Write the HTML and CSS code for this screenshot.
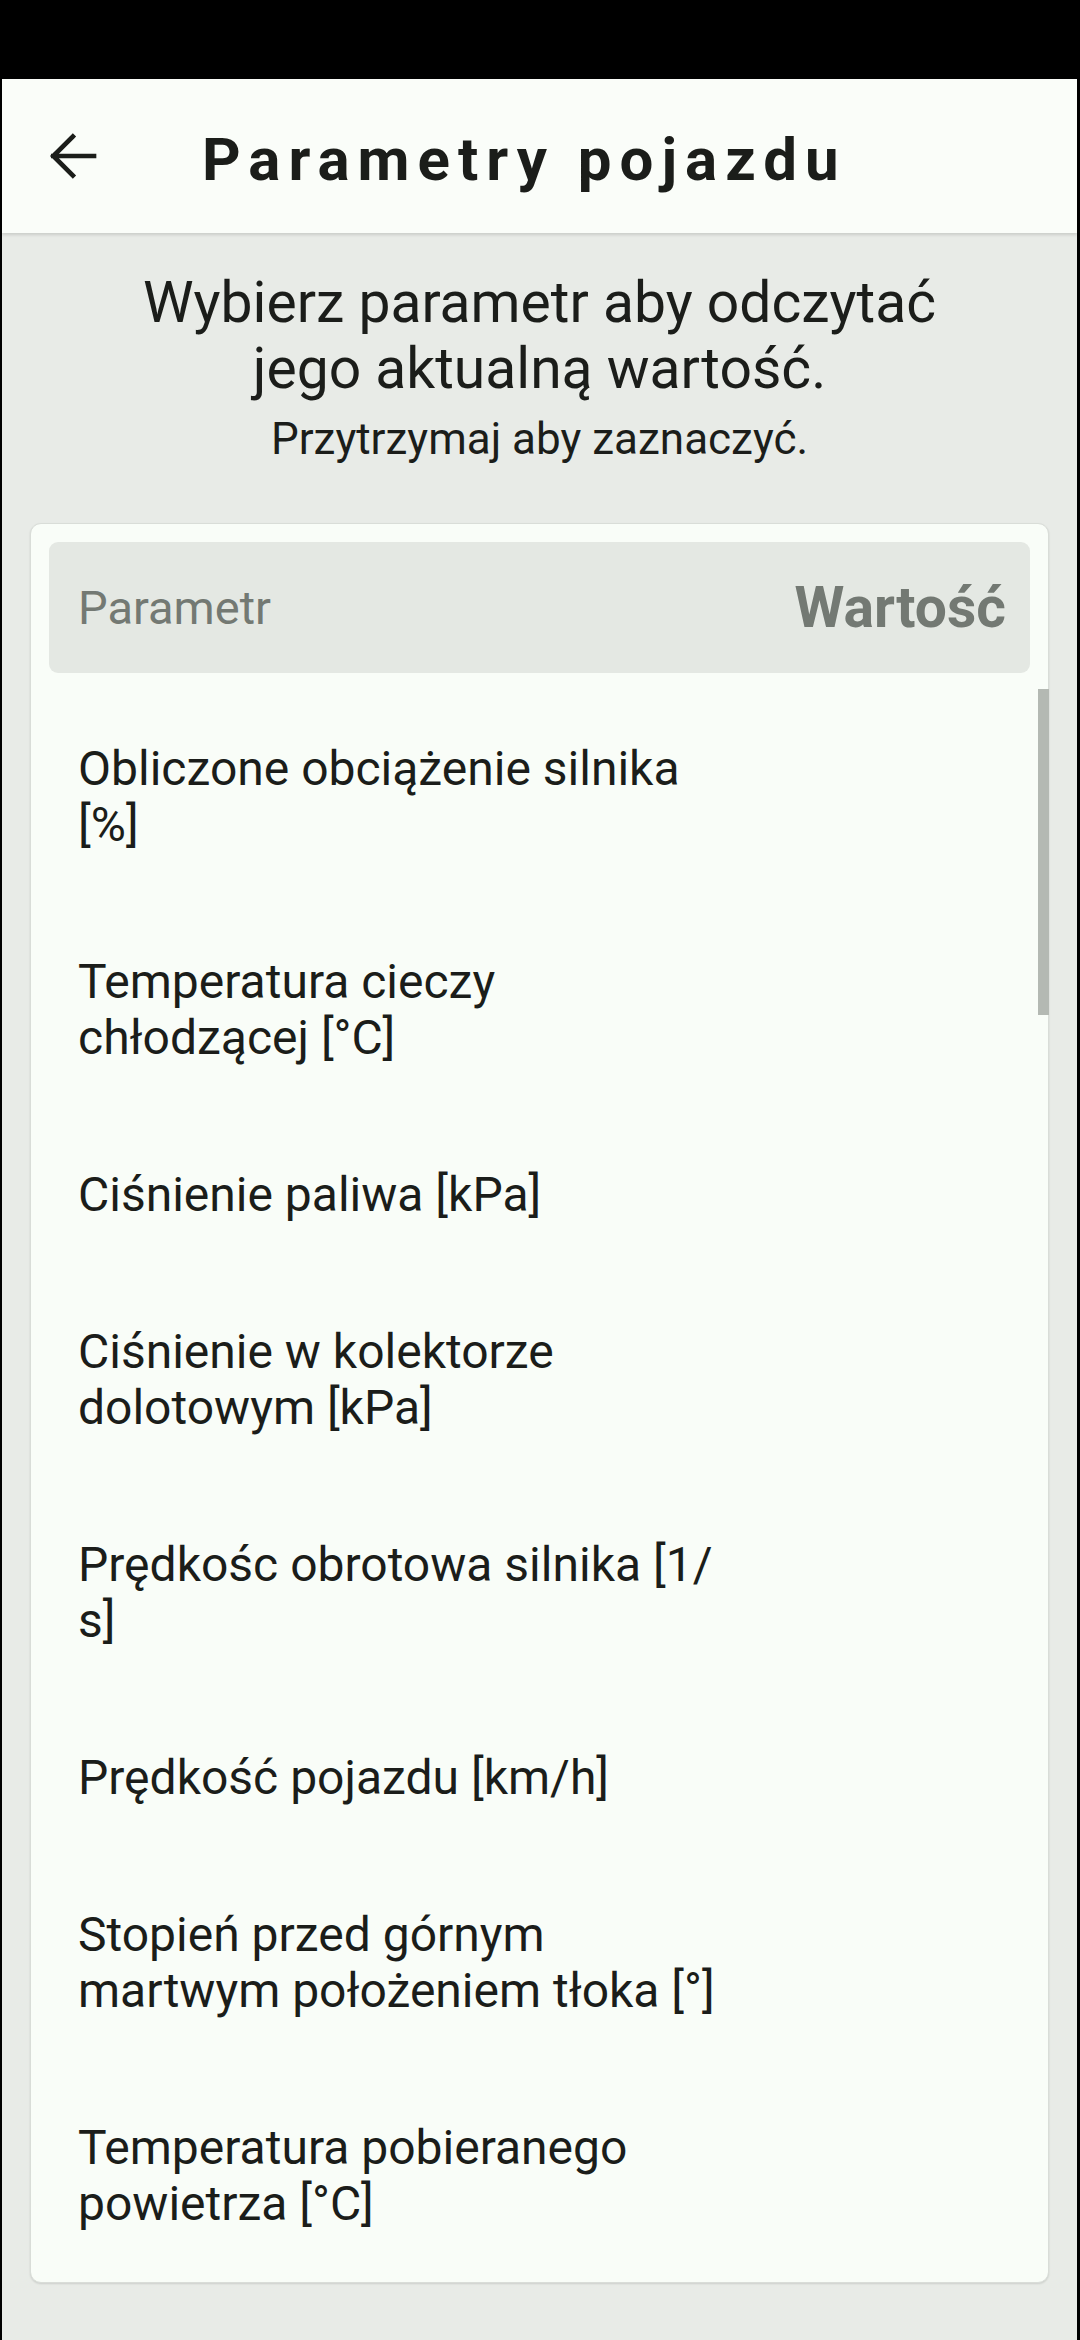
FILE: index.html
```html
<!DOCTYPE html>
<html lang="pl">
<head>
<meta charset="utf-8">
<title>Parametry pojazdu</title>
<link rel="stylesheet" href="styles.css">
</head>
<body>
<div class="status"></div>
<div class="app">
  <header class="appbar">
    <button class="back" aria-label="Wstecz">
      <svg viewBox="0 0 24 24" width="66" height="66"><path d="M20 12H5.2M12.3 4.9L5.2 12l7.1 7.1" fill="none" stroke="#1b1d1a" stroke-width="1.7" stroke-linecap="square"/></svg>
    </button>
    <h1 class="title">Parametry pojazdu</h1>
  </header>
  <main class="content">
    <div class="intro">
      <p class="lead">Wybierz parametr aby odczytać<br>jego aktualną wartość.</p>
      <p class="hint">Przytrzymaj aby zaznaczyć.</p>
    </div>
    <section class="card">
      <div class="thead">
        <span class="th-name">Parametr</span>
        <span class="th-val">Wartość</span>
      </div>
      <ul class="list">
        <li class="row"><span class="name">Obliczone obciążenie silnika<br>[%]</span><span class="value"></span></li>
        <li class="row"><span class="name">Temperatura cieczy<br>chłodzącej [°C]</span><span class="value"></span></li>
        <li class="row"><span class="name">Ciśnienie paliwa [kPa]</span><span class="value"></span></li>
        <li class="row"><span class="name">Ciśnienie w kolektorze<br>dolotowym [kPa]</span><span class="value"></span></li>
        <li class="row"><span class="name">Prędkośc obrotowa silnika [1/<br>s]</span><span class="value"></span></li>
        <li class="row"><span class="name">Prędkość pojazdu [km/h]</span><span class="value"></span></li>
        <li class="row"><span class="name">Stopień przed górnym<br>martwym położeniem tłoka [°]</span><span class="value"></span></li>
        <li class="row"><span class="name">Temperatura pobieranego<br>powietrza [°C]</span><span class="value"></span></li>
      </ul>
      <div class="scrollbar"></div>
    </section>
  </main>
</div>
</body>
</html>
```
FILE: styles.css
```css
* { box-sizing: border-box; }
html, body { margin: 0; padding: 0; }
body {
  background: #000;
  font-family: Roboto, "Noto Sans", "Liberation Sans", sans-serif;
  color: #1b1d1a;
  width: 1080px;
  height: 2340px;
  overflow: hidden;
}
.status { height: 79px; background: #000; }
.app {
  margin: 0 3px 0 2px;
  height: 2261px;
  background: #e8ebe7;
  display: flex;
  flex-direction: column;
}
.appbar {
  height: 154px;
  background: #fafdf9;
  display: flex;
  align-items: center;
  padding-left: 37px;
  box-shadow: 0 2px 3px rgba(0,0,0,0.13);
  position: relative;
  z-index: 1;
}
.back {
  width: 66px;
  height: 66px;
  padding: 0;
  border: 0;
  background: none;
  display: flex;
}
.title {
  margin: 8px 0 0 97px;
  font-size: 60px;
  font-weight: 700;
  letter-spacing: 8px;
  line-height: 1.17;
  color: #1b1d1a;
}
.content {
  flex: 1;
  display: flex;
  flex-direction: column;
  padding: 37px 28px 0;
}
.intro { text-align: center; }
.lead {
  margin: 0;
  font-size: 57px;
  line-height: 66px;
  color: #1b1d1a;
}
.hint {
  margin: 13px 0 0;
  font-size: 44px;
  line-height: 48px;
  color: #1b1d1a;
}
.card {
  position: relative;
  margin-top: 60px;
  background: #f9fdf8;
  border: 1px solid #d9ddd8;
  border-radius: 11px;
  box-shadow: 0 1px 2px rgba(0,0,0,0.12);
  padding: 18px 18px 0;
}
.thead {
  height: 131px;
  background: #e4e8e3;
  border-radius: 9px;
  display: flex;
  align-items: center;
  justify-content: space-between;
  padding: 0 24px 0 29px;
  margin-bottom: 17px;
}
.th-name {
  font-size: 47px;
  color: #737973;
}
.th-val {
  font-size: 57px;
  font-weight: 700;
  color: #737973;
}
.list { list-style: none; margin: 0; padding: 0; }
.row {
  display: flex;
  justify-content: space-between;
  padding: 50.5px 31px 50.5px 29px;
}
.name {
  font-size: 48px;
  line-height: 56px;
  color: #1b1d1a;
}
.scrollbar {
  position: absolute;
  right: -1px;
  top: 165px;
  width: 11px;
  height: 326px;
  background: #b4b9b3;
}
```
